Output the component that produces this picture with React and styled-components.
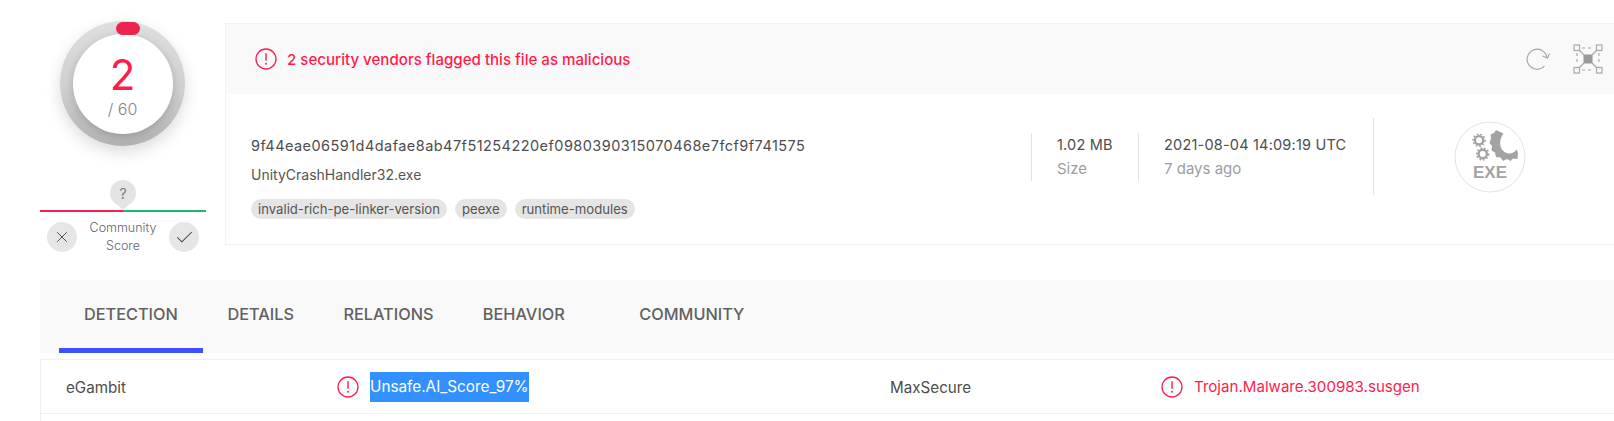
import React from 'react'
import styled, { createGlobalStyle } from 'styled-components';
import { X, Check } from 'lucide-react';

const red = '#ff1c4a';

const GlobalStyle = createGlobalStyle`
    html, body {
        margin: 0;
        padding: 0;
        background: #fff;
        overflow: hidden;
    }
    body {
        font-family: Inter, "Noto Sans", Arial, sans-serif;
        color: #4d4d4d;
    }
`;

const AlertIcon = () => (
    <AlertSvg viewBox="0 0 22 22">
        <circle cx="11" cy="11" r="10" fill="none" stroke={red} strokeWidth="1.3" />
        <rect x="10.3" y="5" width="1.4" height="8" rx="0.7" fill={red} />
        <circle cx="11" cy="15.8" r="0.95" fill={red} />
    </AlertSvg>
);

const ReloadIcon = () => (
    <svg width="26" height="24" viewBox="0 0 26 24" fill="none" stroke="#a3a3a3" strokeWidth="1.1">
        <path d="M22 10.5 A10 10 0 1 0 19.5 19" />
        <path d="M17.5 9 L22.5 11 L24.5 6.5" />
    </svg>
);

const FocusIcon = () => (
    <svg width="30" height="30" viewBox="0 0 30 30" fill="none" stroke="#a8a8a8" strokeWidth="1.2">
        <rect x="1" y="1" width="5.5" height="5.5" />
        <rect x="23.5" y="1" width="5.5" height="5.5" />
        <rect x="1" y="23.5" width="5.5" height="5.5" />
        <rect x="23.5" y="23.5" width="5.5" height="5.5" />
        <rect x="10.5" y="10.5" width="9" height="9" fill="#999" stroke="none" />
        <path d="M9 4 H21 M9 26 H21 M4 9 V21 M26 9 V21" strokeDasharray="3 3" />
        <path d="M6 6 L11 11 M24 6 L19 11 M6 24 L11 19 M24 24 L19 19" />
    </svg>
);

const ExeIcon = () => (
    <svg width="72" height="72" viewBox="0 0 72 72">
        <circle cx="36" cy="36" r="35" fill="#fff" stroke="#e3e3e3" strokeWidth="1" />
        <path
            fill="#a3a3a3"
            d="M42 9 L49.5 12.5 C45 18 45 27 50 30.5 C54 34 59 33 63 28.5 L64 33 L63.5 38 L59 37.5 L56.5 40 L53 38 L49 40 L46.5 36.5 L42 36 L41 31.5 L37.5 29.5 L38 25 L35.5 22 L37 17.5 L36.5 13.5 L40 12 Z"
        />
        <circle cx="25" cy="19.3" r="4.2" fill="none" stroke="#a3a3a3" strokeWidth="2.4" />
        <circle cx="25" cy="19.3" r="6" fill="none" stroke="#a3a3a3" strokeWidth="1.4" strokeDasharray="1.8 1.8" />
        <circle cx="28.7" cy="33" r="4.2" fill="none" stroke="#a3a3a3" strokeWidth="2.4" />
        <circle cx="28.7" cy="33" r="6" fill="none" stroke="#a3a3a3" strokeWidth="1.4" strokeDasharray="1.8 1.8" />
        <ExeLabel x="36" y="57" textAnchor="middle">EXE</ExeLabel>
    </svg>
);

const App = () => {
    const tags = ['invalid-rich-pe-linker-version', 'peexe', 'runtime-modules'];
    const tabs = ['DETECTION', 'DETAILS', 'RELATIONS', 'BEHAVIOR', 'COMMUNITY'];

    return (
        <Page>
            <GlobalStyle />
            <Top>
                <ScoreColumn>
                    <Gauge>
                        <GaugeMark />
                        <GaugeFace>
                            <Positives>2</Positives>
                            <Total>/ 60</Total>
                        </GaugeFace>
                    </Gauge>
                    <Pin><PinMark>?</PinMark></Pin>
                    <VoteLine />
                    <VoteRow>
                        <VoteButton><X size={18} strokeWidth={1.2} /></VoteButton>
                        <VoteLabel>Community<br />Score</VoteLabel>
                        <VoteButton><Check size={21} strokeWidth={1.2} /></VoteButton>
                    </VoteRow>
                </ScoreColumn>
                <Card>
                    <CardHeader>
                        <AlertIcon />
                        <Headline>2 security vendors flagged this file as malicious</Headline>
                        <HeaderActions>
                            <ReloadIcon />
                            <FocusIcon />
                        </HeaderActions>
                    </CardHeader>
                    <CardBody>
                        <FileInfo>
                            <Hash>9f44eae06591d4dafae8ab47f51254220ef0980390315070468e7fcf9f741575</Hash>
                            <FileName>UnityCrashHandler32.exe</FileName>
                            <Tags>
                                {tags.map((tag) => <Tag key={tag}>{tag}</Tag>)}
                            </Tags>
                        </FileInfo>
                        <Stat $width={107}>
                            <StatValue>1.02 MB</StatValue>
                            <StatLabel>Size</StatLabel>
                        </Stat>
                        <Stat $width={235}>
                            <StatValue>2021-08-04 14:09:19 UTC</StatValue>
                            <StatLabel>7 days ago</StatLabel>
                        </Stat>
                        <TypeBox>
                            <ExeIcon />
                        </TypeBox>
                    </CardBody>
                </Card>
            </Top>
            <TabBar>
                {tabs.map((tab, index) => (
                    <Tab key={tab} $active={index === 0} $last={index === tabs.length - 1}>{tab}</Tab>
                ))}
            </TabBar>
            <ResultRow>
                <Engine>eGambit</Engine>
                <Verdict>
                    <AlertIcon />
                    <Selected>Unsafe.AI_Score_97%</Selected>
                </Verdict>
                <Engine>MaxSecure</Engine>
                <Verdict>
                    <AlertIcon />
                    <VerdictText>Trojan.Malware.300983.susgen</VerdictText>
                </Verdict>
            </ResultRow>
            <EmptyRow />
        </Page>
    )
}

const Page = styled.div`
    width: 1614px;
    height: 421px;
    padding-left: 40px;
    box-sizing: border-box;
    overflow: hidden;
`;

const Top = styled.div`
    display: flex;
    align-items: flex-start;
    height: 280px;
`;

const ScoreColumn = styled.div`
    width: 166px;
    flex-shrink: 0;
    display: flex;
    flex-direction: column;
    align-items: center;
`;

const Gauge = styled.div`
    position: relative;
    width: 125px;
    height: 125px;
    margin: 21px 1px 0 0;
    border-radius: 50%;
    display: flex;
    align-items: center;
    justify-content: center;
    background: linear-gradient(180deg, #dfdfdf 0%, #cfcfcf 55%, #b2b2b2 100%);
    box-shadow: 0 6px 16px rgba(0, 0, 0, 0.14);
`;

const GaugeMark = styled.div`
    position: absolute;
    top: 1px;
    left: 56px;
    width: 24px;
    height: 13px;
    border-radius: 7px;
    background: #ee2450;
`;

const GaugeFace = styled.div`
    width: 100px;
    height: 100px;
    border-radius: 50%;
    background: #fff;
    box-shadow: 0 2px 8px rgba(0, 0, 0, 0.18);
    display: flex;
    flex-direction: column;
    align-items: center;
`;

const Positives = styled.div`
    margin-top: 17px;
    font-size: 42px;
    line-height: 48px;
    font-weight: 400;
    color: ${red};
`;

const Total = styled.div`
    font-size: 16px;
    line-height: 20px;
    font-weight: 300;
    color: #7f858e;
`;

const Pin = styled.div`
    width: 26px;
    height: 26px;
    margin-top: 34px;
    border-radius: 50%;
    background: #e4e4e4;
    position: relative;
    display: flex;
    align-items: center;
    justify-content: center;
    &::after {
        content: '';
        position: absolute;
        left: 4px;
        bottom: -3px;
        width: 18px;
        height: 18px;
        background: #e4e4e4;
        border-bottom-right-radius: 3px;
        transform: rotate(45deg) scale(0.8);
    }
`;

const PinMark = styled.span`
    position: relative;
    z-index: 1;
    font-size: 14px;
    color: #777;
`;

const VoteLine = styled.div`
    width: 100%;
    height: 2px;
    margin-top: 4px;
    background: linear-gradient(90deg, #f5234f 50%, #21b573 50%);
`;

const VoteRow = styled.div`
    width: 100%;
    box-sizing: border-box;
    padding: 7px 7px 0;
    display: flex;
    align-items: center;
    justify-content: space-between;
`;

const VoteButton = styled.div`
    width: 30px;
    height: 30px;
    border-radius: 50%;
    background: #e6e6e6;
    color: #444;
    display: flex;
    align-items: center;
    justify-content: center;
`;

const VoteLabel = styled.div`
    font-size: 12.5px;
    line-height: 18px;
    font-weight: 300;
    color: #5f6570;
    text-align: center;
`;

const Card = styled.div`
    flex: 1;
    margin: 23px 0 0 19px;
    height: 222px;
    box-sizing: border-box;
    border: 1px solid #f3f3f3;
    border-right: none;
    display: flex;
    flex-direction: column;
`;

const CardHeader = styled.div`
    height: 70px;
    flex-shrink: 0;
    background: #f9f9f9;
    box-sizing: border-box;
    padding: 0 11px 0 29px;
    display: flex;
    align-items: center;
`;

const AlertSvg = styled.svg`
    width: 22px;
    height: 22px;
    flex-shrink: 0;
`;

const Headline = styled.div`
    margin-left: 10px;
    font-size: 15.1px;
    font-weight: 500;
    color: ${red};
`;

const HeaderActions = styled.div`
    margin-left: auto;
    display: flex;
    align-items: center;
    gap: 22px;
`;

const CardBody = styled.div`
    flex: 1;
    display: flex;
    align-items: center;
    padding: 0 0 25px 25px;
`;

const FileInfo = styled.div`
    width: 780px;
    flex-shrink: 0;
    align-self: flex-start;
    margin-top: 42px;
`;

const Hash = styled.div`
    font-size: 14.5px;
    line-height: 20px;
    letter-spacing: 0.45px;
    color: #4d4d4d;
`;

const FileName = styled.div`
    margin-top: 9px;
    font-size: 14px;
    line-height: 20px;
    color: #555;
`;

const Tags = styled.div`
    margin-top: 14px;
    display: flex;
    gap: 8px;
`;

const Tag = styled.div`
    height: 20px;
    line-height: 20px;
    padding: 0 7px;
    border-radius: 10px;
    background: #e5e5e5;
    font-size: 13.15px;
    color: #555;
`;

const Stat = styled.div`
    width: ${(props) => props.$width}px;
    height: 48px;
    box-sizing: border-box;
    flex-shrink: 0;
    border-left: 1px solid #e2e2e2;
    padding: 2px 0 0 25px;
    display: flex;
    flex-direction: column;
    gap: 4px;
`;

const StatValue = styled.div`
    font-size: 14.5px;
    line-height: 20px;
    letter-spacing: 0.2px;
    color: #4d4d4d;
`;

const StatLabel = styled.div`
    font-size: 15px;
    line-height: 20px;
    color: #9b9ea3;
`;

const TypeBox = styled.div`
    width: 231px;
    height: 77px;
    flex-shrink: 0;
    border-left: 1px solid #e2e2e2;
    display: flex;
    align-items: center;
    justify-content: center;
`;

const ExeLabel = styled.text`
    font-family: "Liberation Sans", Arial, sans-serif;
    font-size: 17px;
    font-weight: 700;
    fill: #a3a3a3;
`;

const TabBar = styled.div`
    height: 73px;
    background: #f9f9f9;
    padding-left: 19px;
    display: flex;
`;

const Tab = styled.div`
    box-sizing: border-box;
    height: 73px;
    padding: 0 ${(props) => (props.$active ? '25px' : '24.7px')};
    margin-left: ${(props) => (props.$last ? '25px' : '0')};
    line-height: 68px;
    font-size: 16.3px;
    font-weight: 500;
    color: #616161;
    border-bottom: 5px solid ${(props) => (props.$active ? '#3f51ff' : 'transparent')};
`;

const ResultRow = styled.div`
    margin-top: 6px;
    height: 55px;
    box-sizing: border-box;
    border: 1px solid #f0f0f0;
    border-right: none;
    padding-left: 25px;
    display: grid;
    grid-template-columns: 271px 553px 271px 1fr;
    align-items: center;
`;

const EmptyRow = styled.div`
    height: 20px;
    border-left: 1px solid #f0f0f0;
`;

const Engine = styled.div`
    margin-top: 1px;
    font-size: 15.2px;
    color: #4d4d4d;
`;

const Verdict = styled.div`
    display: flex;
    align-items: center;
    gap: 11px;
`;

const Selected = styled.span`
    background: #3390ff;
    color: #fff;
    font-size: 15.3px;
    line-height: 30px;
`;

const VerdictText = styled.span`
    font-size: 15.1px;
    color: ${red};
`;

export default App;
